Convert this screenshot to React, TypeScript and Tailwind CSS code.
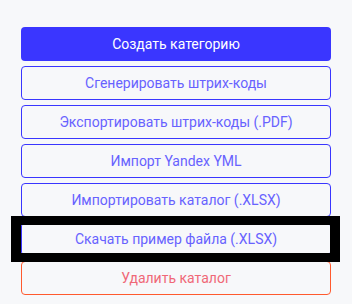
const outlined = [
  'Сгенерировать штрих-коды',
  'Экспортировать штрих-коды (.PDF)',
  'Импорт Yandex YML',
  'Импортировать каталог (.XLSX)',
]

export default function App() {
  return (
    <div
      className="min-h-[304px] w-[352px] bg-[#f7f8fa] px-[21px] pt-[27px]"
      style={{ fontFamily: 'Roboto, "Noto Sans", sans-serif' }}
    >
      <div className="flex flex-col gap-[5px]">
        <button className="h-[34px] w-full rounded-[4px] bg-[#3a36ff] text-[14px] text-white">
          Создать категорию
        </button>
        {outlined.map((label) => (
          <button
            key={label}
            className="h-[34px] w-full rounded-[4px] border border-[#3a36ff] text-[14px] text-[#6762ff]"
          >
            {label}
          </button>
        ))}
        <div className="relative">
          <button className="h-[34px] w-full rounded-[4px] border border-[#3a36ff] text-[14px] text-[#6762ff]">
            Скачать пример файла (.XLSX)
          </button>
          <div className="pointer-events-none absolute -bottom-[6px] -left-[10px] -right-[9px] -top-[6px] border-x-[10px] border-y-[9px] border-black" />
        </div>
        <button className="h-[34px] w-full rounded-[4px] border border-[#ff5a2e] text-[14px] text-[#f06877]">
          Удалить каталог
        </button>
      </div>
    </div>
  )
}
